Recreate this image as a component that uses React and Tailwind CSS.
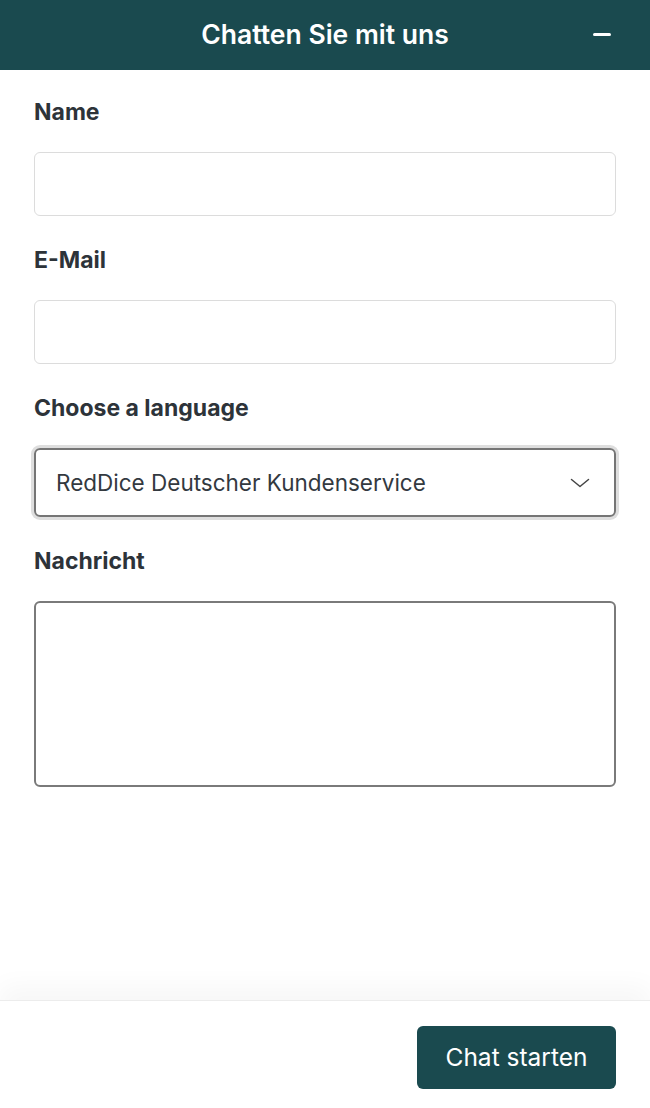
import React from "react";

const Field = ({ label, children }) => (
  <div className="flex flex-col">
    <label className="text-[23px] font-bold text-[#2d3339] leading-[28px] h-[28px] mb-[26px]">{label}</label>
    {children}
  </div>
);

export default function App() {
  return (
    <div className="w-[650px] h-[1108px] flex flex-col bg-white font-['Inter',sans-serif] overflow-hidden">
      {/* Header */}
      <div className="h-[70px] shrink-0 bg-[#1a4a4f] flex items-center justify-center relative">
        <h1 className="text-[26.5px] font-semibold text-white">Chatten Sie mit uns</h1>
        <div className="absolute right-[39px] top-[33px] w-[18px] h-[3px] rounded-full bg-white" />
      </div>

      {/* Form */}
      <div className="flex-1 flex flex-col px-[34px] pt-[28px] gap-[30px]">
        <Field label="Name">
          <input className="h-[64px] w-full rounded-[6px] border border-[#dcdcdc] bg-white outline-none" />
        </Field>
        <Field label="E-Mail">
          <input className="h-[64px] w-full rounded-[6px] border border-[#dcdcdc] bg-white outline-none" />
        </Field>
        <Field label="Choose a language">
          <div className="h-[69px] w-full rounded-[6px] border-2 border-[#757575] shadow-[0_0_0_3px_#dedede] flex items-center justify-between pl-[20px] pr-[24px]">
            <span className="text-[22.5px] text-[#33393f]">RedDice Deutscher Kundenservice</span>
            <svg width="20" height="10" viewBox="0 0 20 10" fill="none">
              <path d="M1.5 1.5l8.5 7 8.5-7" stroke="#444" strokeWidth="1.5" strokeLinecap="round" strokeLinejoin="round" />
            </svg>
          </div>
        </Field>
        <Field label="Nachricht">
          <textarea className="h-[186px] w-full rounded-[6px] border-2 border-[#7a7a7a] bg-white outline-none resize-none" />
        </Field>
      </div>

      {/* Footer */}
      <div className="h-[108px] shrink-0 border-t border-[#ececec] shadow-[0_-14px_24px_rgba(0,0,0,0.035)] flex items-start justify-end px-[34px] pt-[25px]">
        <button className="h-[63px] w-[199px] rounded-[6px] bg-[#1a4a4f] text-white text-[24.5px]">Chat starten</button>
      </div>
    </div>
  );
}
